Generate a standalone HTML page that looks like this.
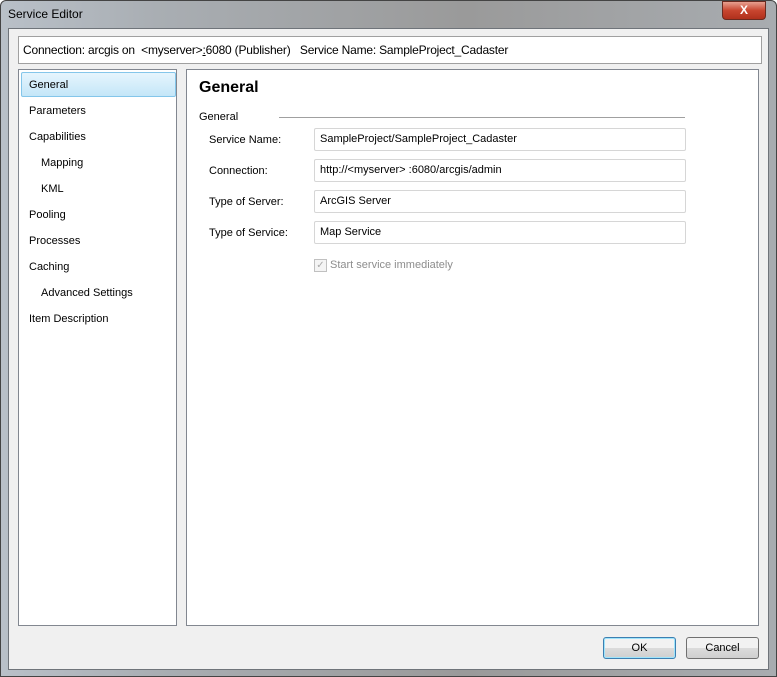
<!DOCTYPE html>
<html><head><style>
*{margin:0;padding:0;box-sizing:border-box}
body{width:777px;height:677px;overflow:hidden;font-family:"Liberation Sans",sans-serif;font-size:11px;color:#000;background:#fff}
.frame{position:absolute;left:0;top:0;width:777px;height:677px;background:linear-gradient(90deg,#b9c0c8 0%,#a9aeb3 20%,#9a9a9a 60%,#a8acb0 100%);border:1px solid #444;border-radius:6px 6px 0 0}
.title{position:absolute;left:8px;top:7px;font-size:12px;color:#000}
.close{position:absolute;left:722px;top:1px;width:44px;height:19px;border-radius:0 0 4px 4px;background:linear-gradient(#e8a090,#c8452f 50%,#b0301c);border:1px solid #6b2a20;color:#fff;font-weight:bold;text-align:center;font-size:12px;line-height:17px}
.client{position:absolute;left:8px;top:28px;width:761px;height:642px;background:#f0f0f0;border:1px solid #6f747a}
.abs{position:absolute}
.hdr{left:18px;top:36px;width:744px;height:28px;background:#fff;border:1px solid #a0a0a0;padding:6px 4px;font-size:12px;letter-spacing:-0.2px}
.left{left:18px;top:69px;width:159px;height:557px;background:#fff;border:1px solid #828790}
.right{left:186px;top:69px;width:573px;height:557px;background:#fff;border:1px solid #828790}
.item{position:absolute;left:10px;font-size:11px}
.sel{position:absolute;left:2px;top:2px;width:155px;height:25px;background:linear-gradient(#e6f5fd,#c4e6f8);border:1px solid #84c6ea;border-radius:2px}
.lbl{position:absolute;left:22px;font-size:11px}
.box{position:absolute;left:127px;width:372px;height:23px;border:1px solid #d6d6d6;border-radius:2px;padding:4px 5px;font-size:11px}
.btn{position:absolute;top:637px;width:73px;height:22px;border:1px solid #707070;border-radius:3px;background:linear-gradient(#f2f2f2 50%,#dcdcdc 50%,#cfcfcf);text-align:center;line-height:20px;font-size:11px}
</style></head><body>
<div class="frame"></div>
<div class="title">Service Editor</div>
<div class="close">X</div>
<div class="client"></div>
<div class="abs hdr">Connection: arcgis on &nbsp;&lt;myserver&gt;<u>:</u>6080 (Publisher) &nbsp; Service Name: SampleProject_Cadaster</div>
<div class="abs left">
<div class="sel"></div>
<div class="item" style="top:9px">General</div>
<div class="item" style="top:35px">Parameters</div>
<div class="item" style="top:61px">Capabilities</div>
<div class="item" style="top:87px;left:22px">Mapping</div>
<div class="item" style="top:113px;left:22px">KML</div>
<div class="item" style="top:139px">Pooling</div>
<div class="item" style="top:165px">Processes</div>
<div class="item" style="top:191px">Caching</div>
<div class="item" style="top:217px;left:22px">Advanced Settings</div>
<div class="item" style="top:243px">Item Description</div>
</div>
<div class="abs right">
<div class="abs" style="left:12px;top:9px;font-size:16px;font-weight:bold">General</div>
<div class="abs" style="left:12px;top:41px">General</div>
<div class="abs" style="left:92px;top:47px;width:406px;height:1px;background:#a0a0a0"></div>
<div class="lbl" style="top:64px">Service Name:</div>
<div class="box" style="top:58px">SampleProject/SampleProject_Cadaster</div>
<div class="lbl" style="top:95px">Connection:</div>
<div class="box" style="top:89px">http://&lt;myserver&gt; :6080/arcgis/admin</div>
<div class="lbl" style="top:126px">Type of Server:</div>
<div class="box" style="top:120px">ArcGIS Server</div>
<div class="lbl" style="top:157px">Type of Service:</div>
<div class="box" style="top:151px">Map Service</div>
<div class="abs" style="left:127px;top:189px;width:13px;height:13px;border:1px solid #c0c0c0;background:#f4f4f4;color:#aaa;font-size:10px;line-height:11px;text-align:center">✓</div>
<div class="abs" style="left:143px;top:189px;color:#8d8d8d">Start service immediately</div>
</div>
<div class="btn" style="left:603px;border-color:#3c7fb1;box-shadow:inset 0 0 0 1px #9fe4fb">OK</div>
<div class="btn" style="left:686px">Cancel</div>
</body></html>
